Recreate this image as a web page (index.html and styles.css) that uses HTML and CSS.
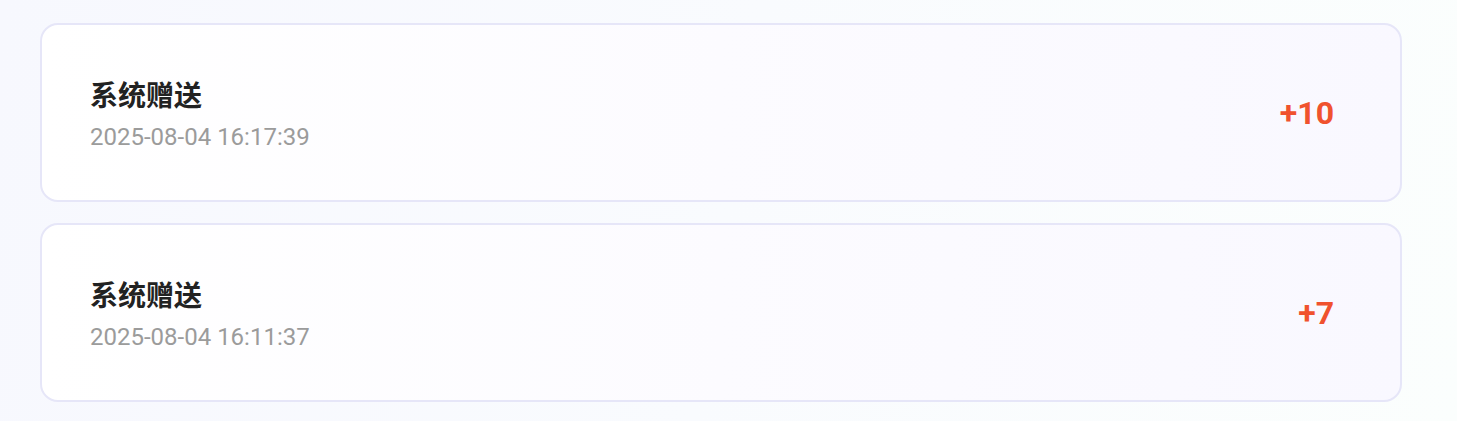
FILE: index.html
```html
<!DOCTYPE html>
<html lang="zh-CN">
<head>
    <meta charset="UTF-8">
    <title>积分明细</title>
    <link rel="stylesheet" href="styles.css">
</head>
<body>

    <div class="record-list">
        <!-- One card per record -->
        <div class="record-card">
            <div class="record-info">
                <div class="record-title">系统赠送</div>
                <div class="record-time">2025-08-04 16:17:39</div>
            </div>
            <div class="record-amount">+10</div>
        </div>

        <div class="record-card">
            <div class="record-info">
                <div class="record-title">系统赠送</div>
                <div class="record-time">2025-08-04 16:11:37</div>
            </div>
            <div class="record-amount">+7</div>
        </div>
    </div>

</body>
</html>
```

FILE: styles.css
```css
* {
    margin: 0;
    padding: 0;
    box-sizing: border-box;
}

body {
    font-family: Roboto, "Noto Sans CJK SC", sans-serif;
    background: linear-gradient(100deg, #f7f8fe 0%, #f9fbfe 50%, #fbfefd 100%);
    height: 100vh;
    overflow: hidden;
}

.record-list {
    width: 1442px;
    padding: 23px 40px 0 40px;
    display: flex;
    flex-direction: column;
    gap: 21px;
}

.record-card {
    height: 179px;
    display: flex;
    align-items: center;
    justify-content: space-between;
    padding: 0 66px 0 48px;
    border: 2px solid #e6e6f8;
    border-radius: 18px;
    background: linear-gradient(90deg, #ffffff 0%, #fcfbff 50%, #f9f8ff 100%);
}

.record-info {
    display: flex;
    flex-direction: column;
    gap: 8px;
    margin-top: 2px;
}

.record-title {
    font-family: "Noto Sans CJK SC", sans-serif;
    font-size: 28px;
    font-weight: 700;
    line-height: 38px;
    color: #222222;
}

.record-time {
    font-size: 24px;
    line-height: 32px;
    color: #9b9b9b;
}

.record-amount {
    font-size: 32px;
    font-weight: 700;
    color: #f0522e;
}
```
